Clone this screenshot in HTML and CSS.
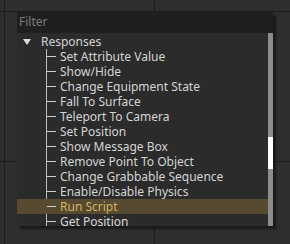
FILE: index.html
```html
<!DOCTYPE html>
<html lang="en">
<head>
  <meta charset="UTF-8" />
  <title>Responses</title>
  <link rel="stylesheet" href="styles.css">
</head>
<body>
  <div class="popup">
    <div class="filter">Filter</div>
    <div class="list">
      <div class="tree">
        <div class="group">
          <span class="arrow"></span>
          <span>Responses</span>
        </div>
        <div class="children">
          <div class="item">Set Attribute Value</div>
          <div class="item">Show/Hide</div>
          <div class="item">Change Equipment State</div>
          <div class="item">Fall To Surface</div>
          <div class="item">Teleport To Camera</div>
          <div class="item">Set Position</div>
          <div class="item">Show Message Box</div>
          <div class="item">Remove Point To Object</div>
          <div class="item">Change Grabbable Sequence</div>
          <div class="item">Enable/Disable Physics</div>
          <div class="item selected">Run Script</div>
          <div class="item">Get Position</div>
        </div>
      </div>
      <div class="scrollbar">
        <div class="thumb"></div>
      </div>
    </div>
  </div>
</body>
</html>
```

FILE: styles.css
```css
body {
  margin: 0;
  width: 290px;
  height: 244px;
  overflow: hidden;
  font-family: "Noto Sans", "Open Sans", sans-serif;
  font-size: 12px;
  color: #d4d4d4;
  background-color: #2e2e2e;
  /* lignes de la grille de fond */
  background-image:
    linear-gradient(#1c1c1c, #1c1c1c),
    linear-gradient(#1c1c1c, #1c1c1c),
    linear-gradient(#1c1c1c, #1c1c1c),
    linear-gradient(#1c1c1c, #1c1c1c),
    linear-gradient(#1c1c1c, #1c1c1c);
  background-size: 100% 1px, 1px 100%, 100% 1px, 1px 12px, 1px 20px;
  background-position: 0 11px, 4px 0, 0 161px, 154px 0, 154px 228px;
  background-repeat: no-repeat;
  position: relative;
}

.popup {
  position: absolute;
  left: 17px;
  top: 12px;
  width: 256px;
  height: 214px;
  display: flex;
  flex-direction: column;
  background-color: #2b2b2b;
  box-shadow: 3px 3px 2px rgba(0, 0, 0, 0.45);
}

.filter {
  height: 21px;
  line-height: 20px;
  padding-left: 2px;
  background-color: #1f1f1f;
  color: #7a7a7a;
}

.list {
  flex: 1;
  display: flex;
  overflow: hidden;
}

.tree {
  flex: 1;
  padding-top: 1px;
  overflow: hidden;
}

.group {
  height: 15px;
  line-height: 15px;
  display: flex;
  align-items: center;
}

.arrow {
  width: 0;
  height: 0;
  margin: 0 10px 0 6px;
  border-left: 4px solid transparent;
  border-right: 4px solid transparent;
  border-top: 6px solid #dcdcdc;
}

.children {
  margin-left: 29px;
  border-left: 1px solid #bdbdbd;
}

.item {
  position: relative;
  height: 15px;
  line-height: 15px;
  padding-left: 13px;
  white-space: nowrap;
}

.item::before {
  content: "";
  position: absolute;
  left: 0;
  top: 7px;
  width: 9px;
  height: 1px;
  background-color: #d0d0d0;
}

.item.selected {
  margin-left: -30px;
  padding-left: 43px;
  color: #d7b25c;
  background-color: #564a31;
}

.item.selected::before {
  left: 30px;
}

.scrollbar {
  width: 5px;
  background-color: #8c8c8c;
  position: relative;
}

.thumb {
  position: absolute;
  left: 0;
  right: 0;
  top: 104px;
  height: 32px;
  background-color: #ffffff;
}
```
